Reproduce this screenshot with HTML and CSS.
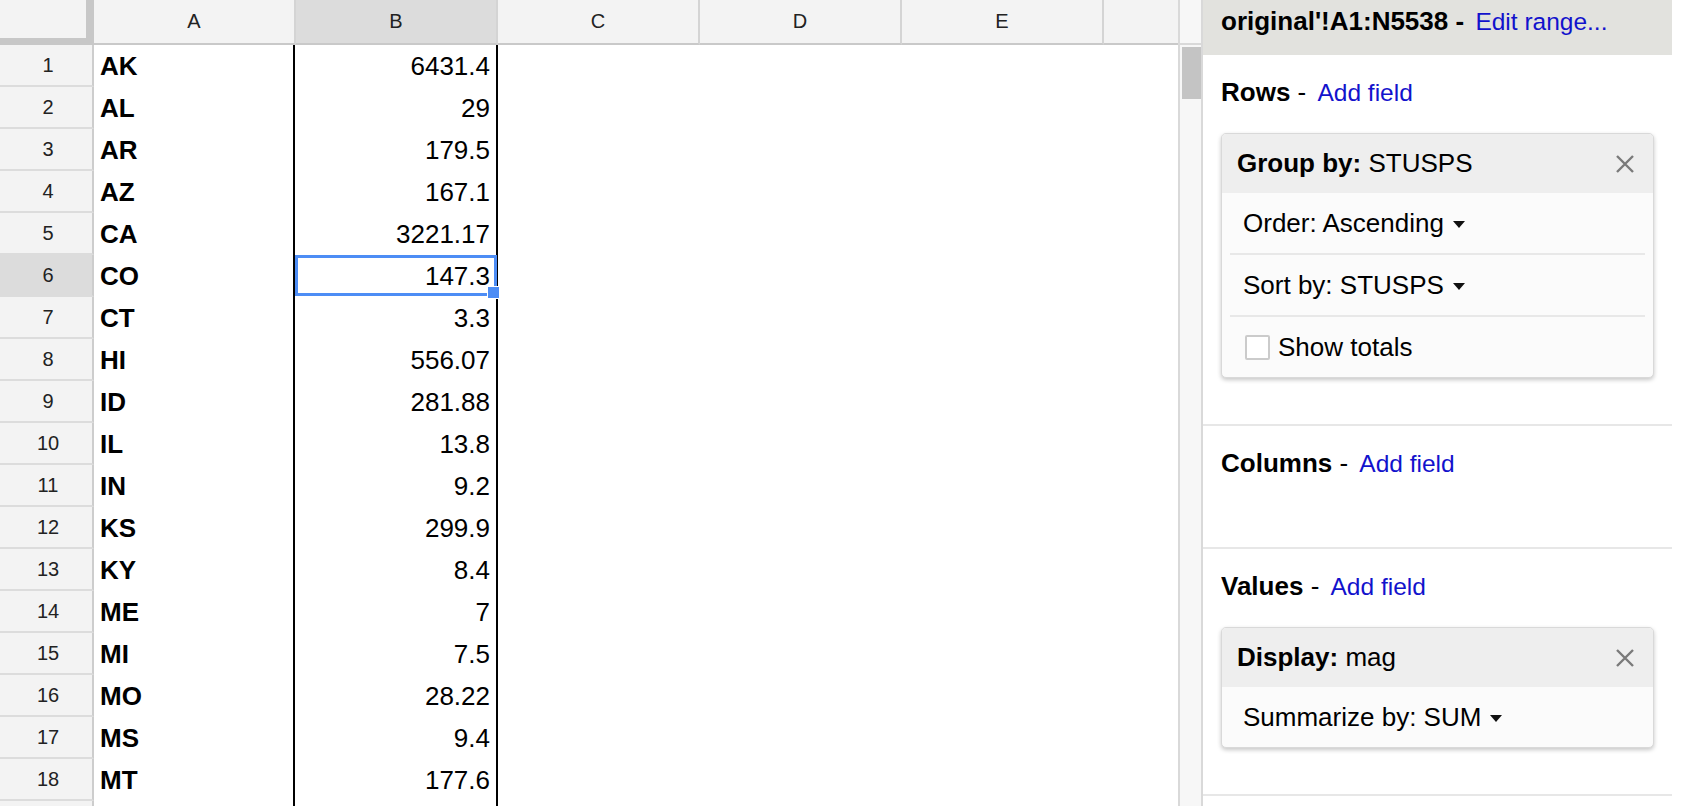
FILE: index.html
```html
<!DOCTYPE html>
<html lang="en">
<head>
<meta charset="utf-8">
<title>Pivot table</title>
<link rel="stylesheet" href="styles.css">
</head>
<body>
<div class="app">
  <div class="sheet">
    <div class="grid">
      <div class="hdr">
        <div class="corner"></div>
        <div class="col-h">A</div>
        <div class="col-h is-active">B</div>
        <div class="col-h">C</div>
        <div class="col-h">D</div>
        <div class="col-h">E</div>
        <div class="col-h"></div>
      </div>
      <div class="row"><div class="row-h">1</div><div class="cell a">AK</div><div class="cell b">6431.4</div><div class="cell"></div><div class="cell"></div><div class="cell"></div><div class="cell"></div></div>
      <div class="row"><div class="row-h">2</div><div class="cell a">AL</div><div class="cell b">29</div><div class="cell"></div><div class="cell"></div><div class="cell"></div><div class="cell"></div></div>
      <div class="row"><div class="row-h">3</div><div class="cell a">AR</div><div class="cell b">179.5</div><div class="cell"></div><div class="cell"></div><div class="cell"></div><div class="cell"></div></div>
      <div class="row"><div class="row-h">4</div><div class="cell a">AZ</div><div class="cell b">167.1</div><div class="cell"></div><div class="cell"></div><div class="cell"></div><div class="cell"></div></div>
      <div class="row"><div class="row-h">5</div><div class="cell a">CA</div><div class="cell b">3221.17</div><div class="cell"></div><div class="cell"></div><div class="cell"></div><div class="cell"></div></div>
      <div class="row"><div class="row-h is-active">6</div><div class="cell a">CO</div><div class="cell b is-selected">147.3</div><div class="cell"></div><div class="cell"></div><div class="cell"></div><div class="cell"></div></div>
      <div class="row"><div class="row-h">7</div><div class="cell a">CT</div><div class="cell b">3.3</div><div class="cell"></div><div class="cell"></div><div class="cell"></div><div class="cell"></div></div>
      <div class="row"><div class="row-h">8</div><div class="cell a">HI</div><div class="cell b">556.07</div><div class="cell"></div><div class="cell"></div><div class="cell"></div><div class="cell"></div></div>
      <div class="row"><div class="row-h">9</div><div class="cell a">ID</div><div class="cell b">281.88</div><div class="cell"></div><div class="cell"></div><div class="cell"></div><div class="cell"></div></div>
      <div class="row"><div class="row-h">10</div><div class="cell a">IL</div><div class="cell b">13.8</div><div class="cell"></div><div class="cell"></div><div class="cell"></div><div class="cell"></div></div>
      <div class="row"><div class="row-h">11</div><div class="cell a">IN</div><div class="cell b">9.2</div><div class="cell"></div><div class="cell"></div><div class="cell"></div><div class="cell"></div></div>
      <div class="row"><div class="row-h">12</div><div class="cell a">KS</div><div class="cell b">299.9</div><div class="cell"></div><div class="cell"></div><div class="cell"></div><div class="cell"></div></div>
      <div class="row"><div class="row-h">13</div><div class="cell a">KY</div><div class="cell b">8.4</div><div class="cell"></div><div class="cell"></div><div class="cell"></div><div class="cell"></div></div>
      <div class="row"><div class="row-h">14</div><div class="cell a">ME</div><div class="cell b">7</div><div class="cell"></div><div class="cell"></div><div class="cell"></div><div class="cell"></div></div>
      <div class="row"><div class="row-h">15</div><div class="cell a">MI</div><div class="cell b">7.5</div><div class="cell"></div><div class="cell"></div><div class="cell"></div><div class="cell"></div></div>
      <div class="row"><div class="row-h">16</div><div class="cell a">MO</div><div class="cell b">28.22</div><div class="cell"></div><div class="cell"></div><div class="cell"></div><div class="cell"></div></div>
      <div class="row"><div class="row-h">17</div><div class="cell a">MS</div><div class="cell b">9.4</div><div class="cell"></div><div class="cell"></div><div class="cell"></div><div class="cell"></div></div>
      <div class="row"><div class="row-h">18</div><div class="cell a">MT</div><div class="cell b">177.6</div><div class="cell"></div><div class="cell"></div><div class="cell"></div><div class="cell"></div></div>
      <div class="row"><div class="row-h"></div><div class="cell a"></div><div class="cell b"></div><div class="cell"></div><div class="cell"></div><div class="cell"></div><div class="cell"></div></div>
    </div>
    <div class="vscroll">
      <div class="vscroll-top"></div>
      <div class="vscroll-track"><div class="vscroll-thumb"></div></div>
    </div>
  </div>

  <aside class="panel">
    <div class="panel-inner">
      <div class="panel-head">
        <span class="panel-title">original'!A1:N5538 -</span> <a class="link">Edit range...</a>
      </div>

      <section class="section">
        <div class="section-title"><b>Rows</b> - <a class="link">Add field</a></div>
        <div class="card">
          <div class="card-head">
            <span><b>Group by:</b> STUSPS</span>
            <svg class="close" width="20" height="20" viewBox="0 0 20 20"><path d="M2 2L18 18M18 2L2 18" stroke="#7a7a7a" stroke-width="2.4" fill="none"/></svg>
          </div>
          <div class="card-row">Order: Ascending<span class="caret"></span></div>
          <div class="card-sep"></div>
          <div class="card-row">Sort by: STUSPS<span class="caret"></span></div>
          <div class="card-sep"></div>
          <div class="card-row"><span class="check"></span>Show totals</div>
        </div>
      </section>

      <section class="section section--empty">
        <div class="section-title"><b>Columns</b> - <a class="link">Add field</a></div>
      </section>

      <section class="section">
        <div class="section-title"><b>Values</b> - <a class="link">Add field</a></div>
        <div class="card">
          <div class="card-head">
            <span><b>Display:</b> mag</span>
            <svg class="close" width="20" height="20" viewBox="0 0 20 20"><path d="M2 2L18 18M18 2L2 18" stroke="#7a7a7a" stroke-width="2.4" fill="none"/></svg>
          </div>
          <div class="card-row">Summarize by: SUM<span class="caret"></span></div>
        </div>
      </section>
    </div>
  </aside>
</div>
</body>
</html>
```

FILE: styles.css
```css
* { box-sizing: border-box; }

html, body {
  margin: 0;
  padding: 0;
}

body {
  width: 1684px;
  height: 806px;
  overflow: hidden;
  background: #fff;
  color: #000;
  font-family: "Liberation Sans", Arial, sans-serif;
}

.app {
  display: flex;
  height: 806px;
}

/* ---------- sheet ---------- */
.sheet {
  display: flex;
  flex: none;
  width: 1203px;
  height: 806px;
}

.grid {
  flex: none;
  width: 1178px;
  display: flex;
  flex-direction: column;
  overflow: hidden;
}

.hdr,
.row {
  display: grid;
  grid-template-columns: 94px 202px 202px 202px 202px 202px 74px;
  flex: none;
}

.hdr { height: 45px; }

.corner {
  background: #f3f3f3;
  border-right: 8px solid #c7c7c7;
  border-bottom: 7px solid #c7c7c7;
}

.col-h {
  background: #f3f3f3;
  border-right: 2px solid #d4d4d4;
  border-bottom: 2px solid #c9c9c9;
  font-size: 20px;
  line-height: 43px;
  text-align: center;
  color: #222;
}

.col-h:last-child { border-right: 0; }

.col-h.is-active { background: #dcdcdc; }

.row { height: 42px; }

.row-h {
  background: #f3f3f3;
  border-right: 2px solid #cdcdcd;
  border-bottom: 2px solid #dcdcdc;
  padding-left: 4px;
  font-size: 20px;
  line-height: 40px;
  text-align: center;
  color: #222;
}

.row-h.is-active { background: #dcdcdc; }

.cell {
  font-size: 26px;
  line-height: 42px;
  white-space: nowrap;
  overflow: hidden;
}

.cell.a {
  font-weight: bold;
  padding-left: 6px;
}

.cell.b {
  overflow: visible;
  text-align: right;
  padding-right: 6px;
  margin: 0 0 0 -3px;
  border-left: 2px solid #000;
  border-right: 2px solid #000;
  position: relative;
}

.cell.b.is-selected::after {
  content: "";
  position: absolute;
  top: 0;
  left: 0;
  right: -1px;
  bottom: 1px;
  border: 3px solid #4d8df5;
}

.cell.b.is-selected::before {
  content: "";
  position: absolute;
  right: -4px;
  bottom: -2px;
  width: 11px;
  height: 11px;
  background: #4d8df5;
  border: 1px solid #fff;
  z-index: 2;
}

/* ---------- scrollbar ---------- */
.vscroll {
  flex: none;
  width: 25px;
  display: flex;
  flex-direction: column;
  background: #f7f7f7;
  border-left: 2px solid #d9d9d9;
  border-right: 2px solid #d9d9d9;
}

.vscroll-top {
  height: 45px;
  flex: none;
  border-bottom: 2px solid #d9d9d9;
  background: #f7f7f7;
}

.vscroll-track {
  flex: 1;
  padding: 2px 0 0 2px;
}

.vscroll-thumb {
  width: 19px;
  height: 52px;
  background: #c4c4c4;
}

/* ---------- panel ---------- */
.panel {
  flex: 1;
  display: flex;
  background: #fff;
}

.panel-inner {
  width: 469px;
  flex: none;
}

.panel-head {
  height: 55px;
  background: #e2e2de;
  padding: 6px 0 0 18px;
  font-size: 26px;
  line-height: 30px;
  white-space: nowrap;
  overflow: hidden;
}

.panel-title { font-weight: bold; }

.link {
  color: #1212cc;
  text-decoration: none;
  margin-left: 4px;
  font-size: 24.5px;
  line-height: 30px;
}

.section {
  padding: 22px 18px 46px;
  border-bottom: 2px solid #e7e7e7;
}

.section--empty { padding-bottom: 69px; }

.section-title {
  height: 30px;
  font-size: 26px;
  line-height: 30px;
  white-space: nowrap;
  color: #000;
  overflow: hidden;
}

.card {
  margin-top: 26px;
  border: 1px solid #d9d9d9;
  border-radius: 5px;
  background: #fbfbfb;
  box-shadow: 0 2px 4px rgba(0, 0, 0, 0.22);
  overflow: hidden;
}

.card-head {
  height: 59px;
  background: #eeeeee;
  display: flex;
  align-items: center;
  justify-content: space-between;
  padding: 0 18px 0 15px;
  font-size: 26px;
  white-space: nowrap;
}

.close { flex: none; display: block; }

.card-row {
  height: 60px;
  display: flex;
  align-items: center;
  padding-left: 21px;
  font-size: 26px;
  white-space: nowrap;
}

.card-sep {
  height: 2px;
  background: #e8e8e8;
  margin: 0 8px;
}

.caret {
  width: 0;
  height: 0;
  border-left: 6px solid transparent;
  border-right: 6px solid transparent;
  border-top: 7px solid #111;
  margin-left: 9px;
  margin-top: 2px;
}

.check {
  width: 25px;
  height: 25px;
  border: 2px solid #cbcbcb;
  border-radius: 2px;
  background: #fff;
  margin: 0 8px 0 2px;
  flex: none;
}
```
